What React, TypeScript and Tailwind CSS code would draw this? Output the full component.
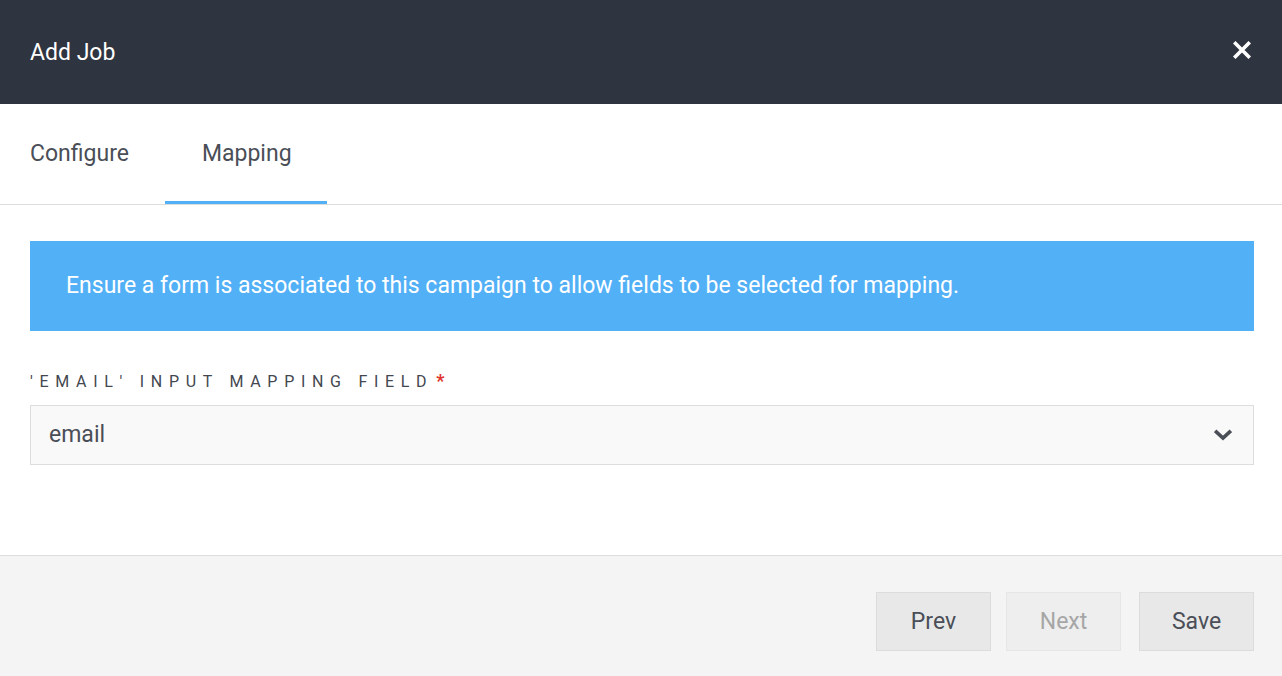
import React from "react";

export default function App() {
  return (
    <div className="w-[1282px] h-[676px] bg-white flex flex-col overflow-hidden" style={{ fontFamily: "Roboto, 'Liberation Sans', sans-serif" }}>
      <div className="h-[104px] bg-[#2e3440] flex items-center justify-between pl-[30px] pr-[31px] shrink-0">
        <div className="text-white text-[23px] leading-none">Add Job</div>
        <svg width="18" height="18" viewBox="0 0 18 18" className="-mt-[4px]">
          <path d="M2.5 2.5 L15.5 15.5 M15.5 2.5 L2.5 15.5" stroke="white" strokeWidth="3.6" strokeLinecap="square" />
        </svg>
      </div>
      <div className="h-[101px] border-b border-[#dddddd] flex items-stretch pl-[30px] shrink-0">
        <div className="flex items-center text-[23px] text-[#4a4e57] pr-[36px] pt-[1px]">Configure</div>
        <div className="flex items-center text-[23px] text-[#4a4e57] pl-[37px] pr-[35px] border-b-[3px] border-[#52b0f7] pt-[4px]">Mapping</div>
      </div>
      <div className="flex-1 pl-[30px] pr-[28px] pt-[36px]">
        <div className="h-[90px] bg-[#52b0f7] flex items-center pl-[36px] text-white text-[23px]">
          Ensure a form is associated to this campaign to allow fields to be selected for mapping.
        </div>
        <div className="mt-[43px] flex items-center leading-none">
          <span className="text-[16px] tracking-[6.7px] text-[#43474f] uppercase">'Email' input mapping field</span>
          <span className="text-[#e0342b] text-[18px] font-bold ml-[3px] -mt-[2px]">*</span>
        </div>
        <div className="mt-[15px] h-[60px] bg-[#f9f9f9] border border-[#dddddd] flex items-center justify-between pl-[18px] pr-[21px]">
          <span className="text-[23px] text-[#4a4e57]">email</span>
          <svg width="18" height="12" viewBox="0 0 18 12">
            <path d="M2.5 3 L9 9 L15.5 3" stroke="#4a4e57" strokeWidth="3.6" fill="none" strokeLinecap="square" />
          </svg>
        </div>
      </div>
      <div className="h-[121px] bg-[#f4f4f4] border-t border-[#dddddd] flex items-start pt-[36px] justify-end pr-[28px] shrink-0">
        <button className="w-[115px] h-[59px] pt-[2px] bg-[#e8e8e8] border border-[#dcdcdc] text-[23px] text-[#4a4e57]">Prev</button>
        <button className="ml-[15px] w-[115px] h-[59px] pt-[2px] bg-[#eeeeee] border border-[#e6e6e6] text-[23px] text-[#a6a6a6]">Next</button>
        <button className="ml-[18px] w-[115px] h-[59px] pt-[2px] bg-[#e8e8e8] border border-[#dcdcdc] text-[23px] text-[#4a4e57]">Save</button>
      </div>
    </div>
  );
}
